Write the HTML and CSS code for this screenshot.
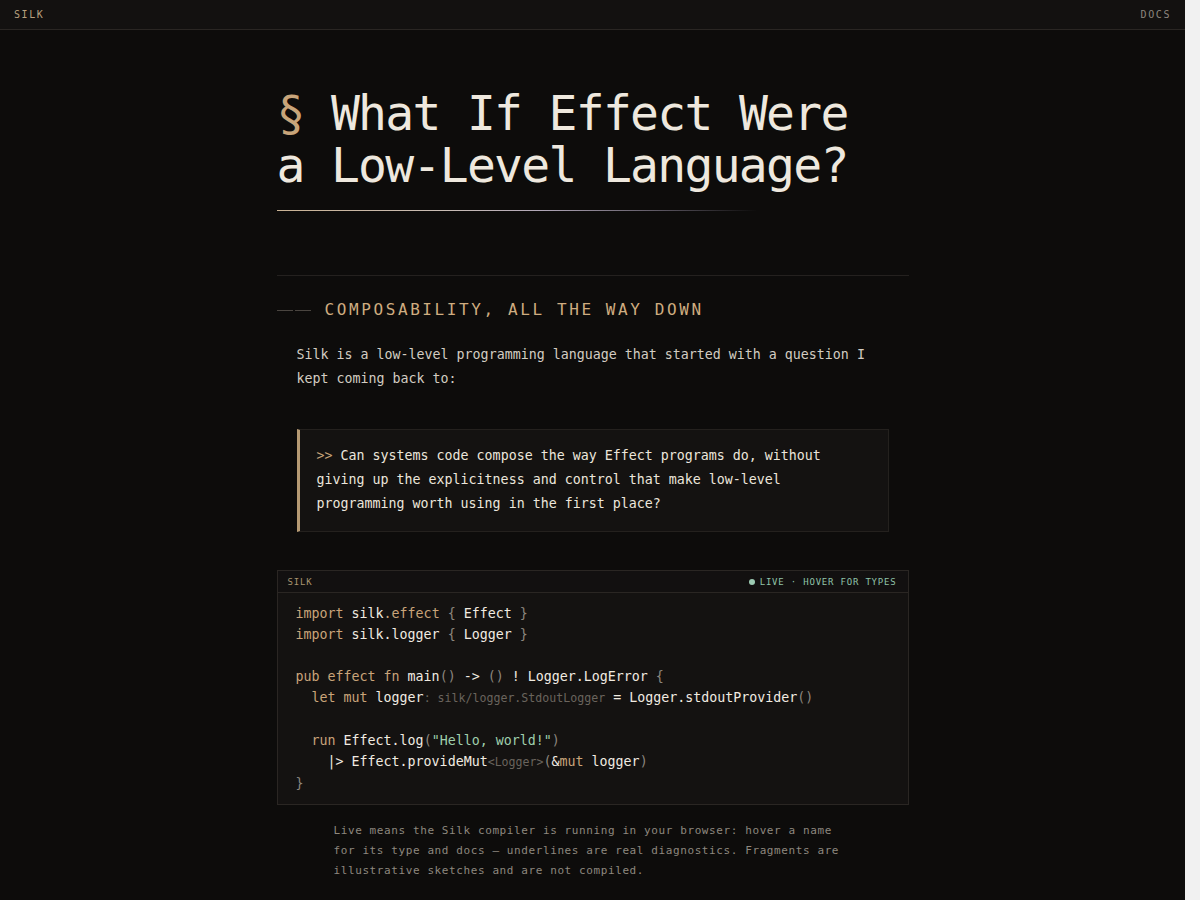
FILE: index.html
```html
<!DOCTYPE html>
<html lang="en">
<head>
<meta charset="utf-8">
<title>Silk</title>
<link rel="stylesheet" href="styles.css">
</head>
<body>
<header class="nav">
  <span class="brand">SILK</span>
  <span class="docs">DOCS</span>
</header>
<main class="page">
  <h1 class="title"><span class="sect">§</span> What If Effect Were a Low-Level Language?</h1>
  <div class="title-rule"></div>
  <hr class="divider">
  <h2 class="section"><span class="dash"></span>COMPOSABILITY, ALL THE WAY DOWN</h2>
  <div class="body">
    <p class="para">Silk is a low-level programming language that started with a question I kept coming back to:</p>
    <blockquote class="quote"><span class="prompt">&gt;&gt;</span> Can systems code compose the way Effect programs do, without giving up the explicitness and control that make low-level programming worth using in the first place?</blockquote>
  </div>
  <section class="code-panel">
    <div class="code-head">
      <span class="lang">SILK</span>
      <span class="live"><span class="dot"></span>LIVE · HOVER FOR TYPES</span>
    </div>
<pre class="code"><span class="k">import</span> <span class="i">silk</span><span class="k">.effect</span> <span class="p">{</span> <span class="i">Effect</span> <span class="p">}</span>
<span class="k">import</span> <span class="i">silk.logger</span> <span class="p">{</span> <span class="i">Logger</span> <span class="p">}</span>

<span class="k">pub effect fn</span> <span class="i">main</span><span class="p">()</span> <span class="i">-&gt;</span> <span class="p">()</span> <span class="i">!</span> <span class="i">Logger.LogError</span> <span class="p">{</span>
  <span class="k">let mut</span> <span class="i">logger</span><span class="hint">: silk/logger.StdoutLogger</span> <span class="i">=</span> <span class="i">Logger.stdoutProvider</span><span class="p">()</span>

  <span class="k">run</span> <span class="i">Effect.log</span><span class="p">(</span><span class="s">"Hello, world!"</span><span class="p">)</span>
    <span class="i">|&gt;</span> <span class="i">Effect.provideMut</span><span class="hint">&lt;Logger&gt;</span><span class="p">(</span><span class="i">&amp;</span><span class="k">mut</span> <span class="i">logger</span><span class="p">)</span>
<span class="p">}</span></pre>
  </section>
  <p class="caption">Live means the Silk compiler is running in your browser: hover a name for its type and docs — underlines are real diagnostics. Fragments are illustrative sketches and are not compiled.</p>
</main>
</body>
</html>
```

FILE: styles.css
```css
* { box-sizing: border-box; }
html, body { margin: 0; padding: 0; }
html {
  background: linear-gradient(90deg, #0d0c0b 0, #0d0c0b 1185px, #f1f1f1 1185px, #f1f1f1 100%);
  min-height: 100%;
}
body {
  width: 1185px;
  background: #0d0c0b;
  color: #e9e3d9;
  font-family: "DejaVu Sans Mono", "Liberation Mono", monospace;
}
.nav {
  height: 30px;
  display: flex;
  align-items: center;
  justify-content: space-between;
  padding: 0 14px;
  background: #131110;
  border-bottom: 1px solid #2a2623;
  font-size: 10px;
  letter-spacing: 1.6px;
}
.brand { color: #b8a07e; }
.docs { color: #8c867e; }

.page {
  width: 632px;
  margin: 0 auto;
  padding: 57px 0 60px;
}
.title {
  margin: 0;
  max-width: 600px;
  font-size: 48px;
  line-height: 52px;
  font-weight: 500;
  letter-spacing: -1.7px;
  color: #eee8de;
}
.sect { color: #c8a57a; }
.title-rule {
  margin-top: 19px;
  width: 480px;
  height: 1px;
  background: linear-gradient(90deg, #c9b294 0%, #c9bdb5 35%, #b1a7b8 55%, #5a5560 80%, rgba(40,38,40,0) 100%);
}
.divider {
  margin: 64px 0 0;
  border: 0;
  height: 1px;
  background: #24211f;
}
.section {
  margin: 24px 0 0;
  display: flex;
  align-items: center;
  font-size: 16px;
  line-height: 20px;
  font-weight: 500;
  letter-spacing: 2.6px;
  color: #cfad80;
}
.dash {
  display: block;
  width: 34px;
  height: 1px;
  margin-right: 14px;
  background: linear-gradient(90deg, #4a4540 0, #4a4540 16px, transparent 16px, transparent 18px, #4a4540 18px);
}
.body { padding: 0 20px; }
.para {
  margin: 23px 0 0;
  font-size: 13.3px;
  line-height: 24px;
  color: #d3ccc2;
}
.quote {
  margin: 38px 0 0;
  padding: 14px 18px 15px 17px;
  background: #141211;
  border: 1px solid #24211e;
  border-left: 3px solid #b59a73;
  font-size: 13.3px;
  line-height: 24px;
  color: #ece6dc;
}
.prompt { color: #c9a47a; }

.code-panel {
  margin-top: 38px;
  background: #141211;
  border: 1px solid #2a2623;
}
.code-head {
  height: 22px;
  display: flex;
  align-items: center;
  justify-content: space-between;
  padding: 0 11px 0 10px;
  border-bottom: 1px solid #2a2623;
  background: #121010;
  font-size: 9px;
  letter-spacing: 0.8px;
}
.lang { color: #a8946f; }
.live { color: #8fc2a8; display: flex; align-items: center; }
.dot {
  width: 6px; height: 6px; border-radius: 50%;
  background: #9ccab2;
  margin-right: 5px;
}
.code {
  margin: 0;
  padding: 10px 18px 10px;
  font-family: inherit;
  font-size: 13.3px;
  line-height: 21px;
  color: #ece6dc;
}
.k { color: #c9a47a; }
.i { color: #f1ebe1; }
.p { color: #8c867e; }
.s { color: #9fcfad; }
.hint { color: #6a645d; font-size: 11.6px; }

.caption {
  margin: 16px 0 0;
  padding: 0 56px 0 57px;
  font-size: 11px;
  line-height: 20px;
  letter-spacing: 0.6px;
  color: #8e887f;
}
```
